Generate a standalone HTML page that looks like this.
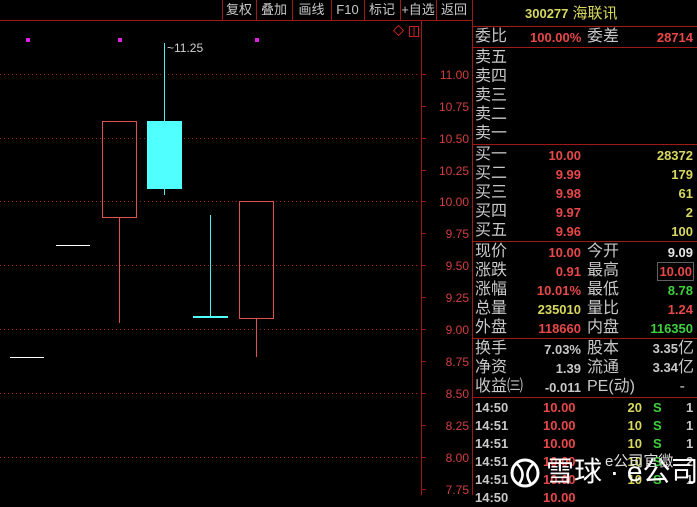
<!DOCTYPE html>
<html><head><meta charset="utf-8"><style>
*{margin:0;padding:0}
body{width:697px;height:495px;background:#000;overflow:hidden;position:relative;font-family:"Liberation Sans","Noto Sans CJK SC",sans-serif;}
.t{position:absolute;white-space:nowrap;font-size:14px;line-height:18px}
.l{color:#c8c8c8;font-size:16px}
.r{color:#e84848}
.y{color:#d8d860}
.g{color:#40d040}
.w{color:#e8e8e8}
.b{font-weight:bold;font-size:13px}
.hl{position:absolute;left:472px;width:225px;height:1px;background:#a01818}
.btn{position:absolute;top:0;height:20px;line-height:20px;color:#c8c8c8;font-size:13px;text-align:center}
</style></head><body>
<svg width="697" height="495" style="position:absolute;left:0;top:0">
<line x1="0" y1="20.5" x2="472" y2="20.5" stroke="#a01818"/>
<g stroke="#a01818">
<line x1="222.5" y1="0" x2="222.5" y2="20"/><line x1="256.5" y1="0" x2="256.5" y2="20"/><line x1="292.5" y1="0" x2="292.5" y2="20"/><line x1="331.5" y1="0" x2="331.5" y2="20"/><line x1="364.5" y1="0" x2="364.5" y2="20"/><line x1="400.5" y1="0" x2="400.5" y2="20"/><line x1="436.5" y1="0" x2="436.5" y2="20"/>
<line x1="421.5" y1="20" x2="421.5" y2="495"/>
<line x1="472.5" y1="0" x2="472.5" y2="495"/>
</g>
<g stroke="#a02020" stroke-dasharray="1,3">
<line x1="0" y1="74.5" x2="420" y2="74.5"/><line x1="0" y1="138.5" x2="420" y2="138.5"/><line x1="0" y1="201.5" x2="420" y2="201.5"/><line x1="0" y1="265.5" x2="420" y2="265.5"/><line x1="0" y1="329.5" x2="420" y2="329.5"/><line x1="0" y1="393.5" x2="420" y2="393.5"/><line x1="0" y1="457.5" x2="420" y2="457.5"/>
</g>
<g stroke="#a01818">
<line x1="421" y1="74.5" x2="426" y2="74.5"/><line x1="421" y1="106.5" x2="426" y2="106.5"/><line x1="421" y1="138.5" x2="426" y2="138.5"/><line x1="421" y1="170.5" x2="426" y2="170.5"/><line x1="421" y1="201.5" x2="426" y2="201.5"/><line x1="421" y1="233.5" x2="426" y2="233.5"/><line x1="421" y1="265.5" x2="426" y2="265.5"/><line x1="421" y1="297.5" x2="426" y2="297.5"/><line x1="421" y1="329.5" x2="426" y2="329.5"/><line x1="421" y1="361.5" x2="426" y2="361.5"/><line x1="421" y1="393.5" x2="426" y2="393.5"/><line x1="421" y1="425.5" x2="426" y2="425.5"/><line x1="421" y1="457.5" x2="426" y2="457.5"/><line x1="421" y1="489.5" x2="426" y2="489.5"/>
</g>
<g font-size="12" fill="#d04040" text-anchor="end" font-family="Liberation Sans">
<text x="469" y="79">11.00</text><text x="469" y="111">10.75</text><text x="469" y="143">10.50</text><text x="469" y="175">10.25</text><text x="469" y="206">10.00</text><text x="469" y="238">9.75</text><text x="469" y="270">9.50</text><text x="469" y="302">9.25</text><text x="469" y="334">9.00</text><text x="469" y="366">8.75</text><text x="469" y="398">8.50</text><text x="469" y="430">8.25</text><text x="469" y="462">8.00</text><text x="469" y="494">7.75</text>
</g>
<g fill="#e020e0"><rect x="26" y="38" width="4" height="4"/><rect x="118" y="38" width="4" height="4"/><rect x="255" y="38" width="4" height="4"/></g>
<rect x="395" y="27" width="7" height="7" fill="none" stroke="#c02020" transform="rotate(45 398.5 30.5)"/>
<rect x="409.5" y="26.5" width="9" height="10" fill="none" stroke="#c02020"/><line x1="414" y1="27" x2="414" y2="36" stroke="#c02020"/>
<line x1="56" y1="245.5" x2="90" y2="245.5" stroke="#fff"/>
<line x1="10" y1="357.5" x2="44" y2="357.5" stroke="#fff"/>
<rect x="102.5" y="121.5" width="34" height="96" fill="none" stroke="#e05050"/>
<line x1="119.5" y1="217" x2="119.5" y2="323" stroke="#e05050"/>
<line x1="164.5" y1="43" x2="164.5" y2="195" stroke="#50f0f0"/>
<rect x="147" y="121" width="35" height="68" fill="#50ffff"/>
<line x1="210.5" y1="215" x2="210.5" y2="317" stroke="#50f0f0"/>
<rect x="193" y="316" width="35" height="2" fill="#50ffff"/>
<rect x="239.5" y="201.5" width="34" height="117" fill="none" stroke="#e05050"/>
<line x1="256.5" y1="319" x2="256.5" y2="357" stroke="#e05050"/>
<text x="167" y="52" font-size="12" fill="#d0d0d0">~11.25</text>
</svg>
<div class="btn" style="left:222px;width:34px">复权</div>
<div class="btn" style="left:256px;width:36px">叠加</div>
<div class="btn" style="left:292px;width:39px">画线</div>
<div class="btn" style="left:331px;width:33px">F10</div>
<div class="btn" style="left:364px;width:36px">标记</div>
<div class="btn" style="left:400px;width:36px">+自选</div>
<div class="btn" style="left:436px;width:36px">返回</div>

<div class="t y" style="left:525px;top:5px;font-size:15px"><b style="font-size:13px">300277</b> 海联讯</div>
<div class="hl" style="top:26px"></div>
<div class="t l" style="left:475px;top:28px">委比</div>
<div class="t r b" style="left:530px;top:29px">100.00%</div>
<div class="t l" style="left:587px;top:28px">委差</div>
<div class="t r b" style="right:4px;top:29px">28714</div>
<div class="hl" style="top:47px"></div>
<div class="t l" style="left:475px;top:49px">卖五</div>
<div class="t l" style="left:475px;top:68px">卖四</div>
<div class="t l" style="left:475px;top:87px">卖三</div>
<div class="t l" style="left:475px;top:106px">卖二</div>
<div class="t l" style="left:475px;top:125px">卖一</div>
<div class="hl" style="top:144px"></div>
<div class="t l" style="left:475px;top:146px">买一</div>
<div class="t l" style="left:475px;top:165px">买二</div>
<div class="t l" style="left:475px;top:184px">买三</div>
<div class="t l" style="left:475px;top:203px">买四</div>
<div class="t l" style="left:475px;top:222px">买五</div>
<div class="t r b" style="right:116px;top:147px">10.00</div>
<div class="t r b" style="right:116px;top:166px">9.99</div>
<div class="t r b" style="right:116px;top:185px">9.98</div>
<div class="t r b" style="right:116px;top:204px">9.97</div>
<div class="t r b" style="right:116px;top:223px">9.96</div>
<div class="t y b" style="right:4px;top:147px">28372</div>
<div class="t y b" style="right:4px;top:166px">179</div>
<div class="t y b" style="right:4px;top:185px">61</div>
<div class="t y b" style="right:4px;top:204px">2</div>
<div class="t y b" style="right:4px;top:223px">100</div>
<div class="hl" style="top:241px"></div>
<div class="t l" style="left:475px;top:243px">现价</div>
<div class="t l" style="left:475px;top:262px">涨跌</div>
<div class="t l" style="left:475px;top:281px">涨幅</div>
<div class="t l" style="left:475px;top:300px">总量</div>
<div class="t l" style="left:475px;top:319px">外盘</div>
<div class="t r b" style="right:116px;top:244px">10.00</div>
<div class="t r b" style="right:116px;top:263px">0.91</div>
<div class="t r b" style="right:116px;top:282px">10.01%</div>
<div class="t y b" style="right:116px;top:301px">235010</div>
<div class="t r b" style="right:116px;top:320px">118660</div>
<div class="t l" style="left:587px;top:243px">今开</div>
<div class="t l" style="left:587px;top:262px">最高</div>
<div class="t l" style="left:587px;top:281px">最低</div>
<div class="t l" style="left:587px;top:300px">量比</div>
<div class="t l" style="left:587px;top:319px">内盘</div>
<div class="t w b" style="right:4px;top:244px">9.09</div>
<div class="t r b" style="right:3px;top:262px;border:1px solid #606060;padding:0 1px;line-height:17px">10.00</div>
<div class="t g b" style="right:4px;top:282px">8.78</div>
<div class="t r b" style="right:4px;top:301px">1.24</div>
<div class="t g b" style="right:4px;top:320px">116350</div>
<div class="hl" style="top:338px"></div>
<div class="t l" style="left:475px;top:340px">换手</div>
<div class="t l" style="left:475px;top:359px">净资</div>
<div class="t l" style="left:475px;top:378px">收益㈢</div>
<div class="t l b" style="right:116px;top:341px;font-size:13px">7.03%</div>
<div class="t l b" style="right:116px;top:360px;font-size:13px">1.39</div>
<div class="t l b" style="right:116px;top:379px;font-size:13px">-0.011</div>
<div class="t l" style="left:587px;top:340px">股本</div>
<div class="t l" style="left:587px;top:359px">流通</div>
<div class="t l" style="left:587px;top:378px">PE(动)</div>
<div class="t l" style="right:3px;top:340px"><b style="font-size:13px">3.35</b>亿</div>
<div class="t l" style="right:3px;top:359px"><b style="font-size:13px">3.34</b>亿</div>
<div class="t l" style="right:12px;top:378px">-</div>
<div class="hl" style="top:397px"></div>
<div class="t l b" style="left:475px;top:399px;font-size:13px">14:50</div>
<div class="t l b" style="left:475px;top:417px;font-size:13px">14:51</div>
<div class="t l b" style="left:475px;top:435px;font-size:13px">14:51</div>
<div class="t l b" style="left:475px;top:453px;font-size:13px">14:51</div>
<div class="t l b" style="left:475px;top:471px;font-size:13px">14:51</div>
<div class="t l b" style="left:475px;top:489px;font-size:13px">14:50</div>
<div class="t r b" style="left:543px;top:399px">10.00</div>
<div class="t r b" style="left:543px;top:417px">10.00</div>
<div class="t r b" style="left:543px;top:435px">10.00</div>
<div class="t r b" style="left:543px;top:453px">10.00</div>
<div class="t r b" style="left:543px;top:471px">10.00</div>
<div class="t r b" style="left:543px;top:489px">10.00</div>
<div class="t y b" style="right:55px;top:399px">20</div>
<div class="t y b" style="right:55px;top:417px">10</div>
<div class="t y b" style="right:55px;top:435px">10</div>
<div class="t y b" style="right:55px;top:453px">10</div>
<div class="t y b" style="right:55px;top:471px">10</div>
<div class="t g b" style="left:653px;top:399px">S</div>
<div class="t g b" style="left:653px;top:417px">S</div>
<div class="t g b" style="left:653px;top:435px">S</div>
<div class="t g b" style="left:653px;top:453px">S</div>
<div class="t g b" style="left:653px;top:471px">S</div>
<div class="t l b" style="left:686px;top:399px">1</div>
<div class="t l b" style="left:686px;top:417px">1</div>
<div class="t l b" style="left:686px;top:435px">1</div>
<div class="t l b" style="left:686px;top:453px">2</div>
<div class="t l b" style="left:686px;top:471px">1</div>
<svg width="697" height="495" style="position:absolute;left:0;top:0">
<circle cx="525" cy="473" r="13" fill="none" stroke="#fff" stroke-width="3"/>
<path d="M517 464 Q527 473 519 484 M533 464 Q523 473 531 484" fill="none" stroke="#fff" stroke-width="2.5"/>
</svg>
<div class="t" style="left:546px;top:455px;font-size:28px;line-height:34px;color:#fff">雪球 · e公司</div>
<div class="t" style="left:605px;top:453px;font-size:15px;color:#ddd">e公司官微</div>
</body></html>
